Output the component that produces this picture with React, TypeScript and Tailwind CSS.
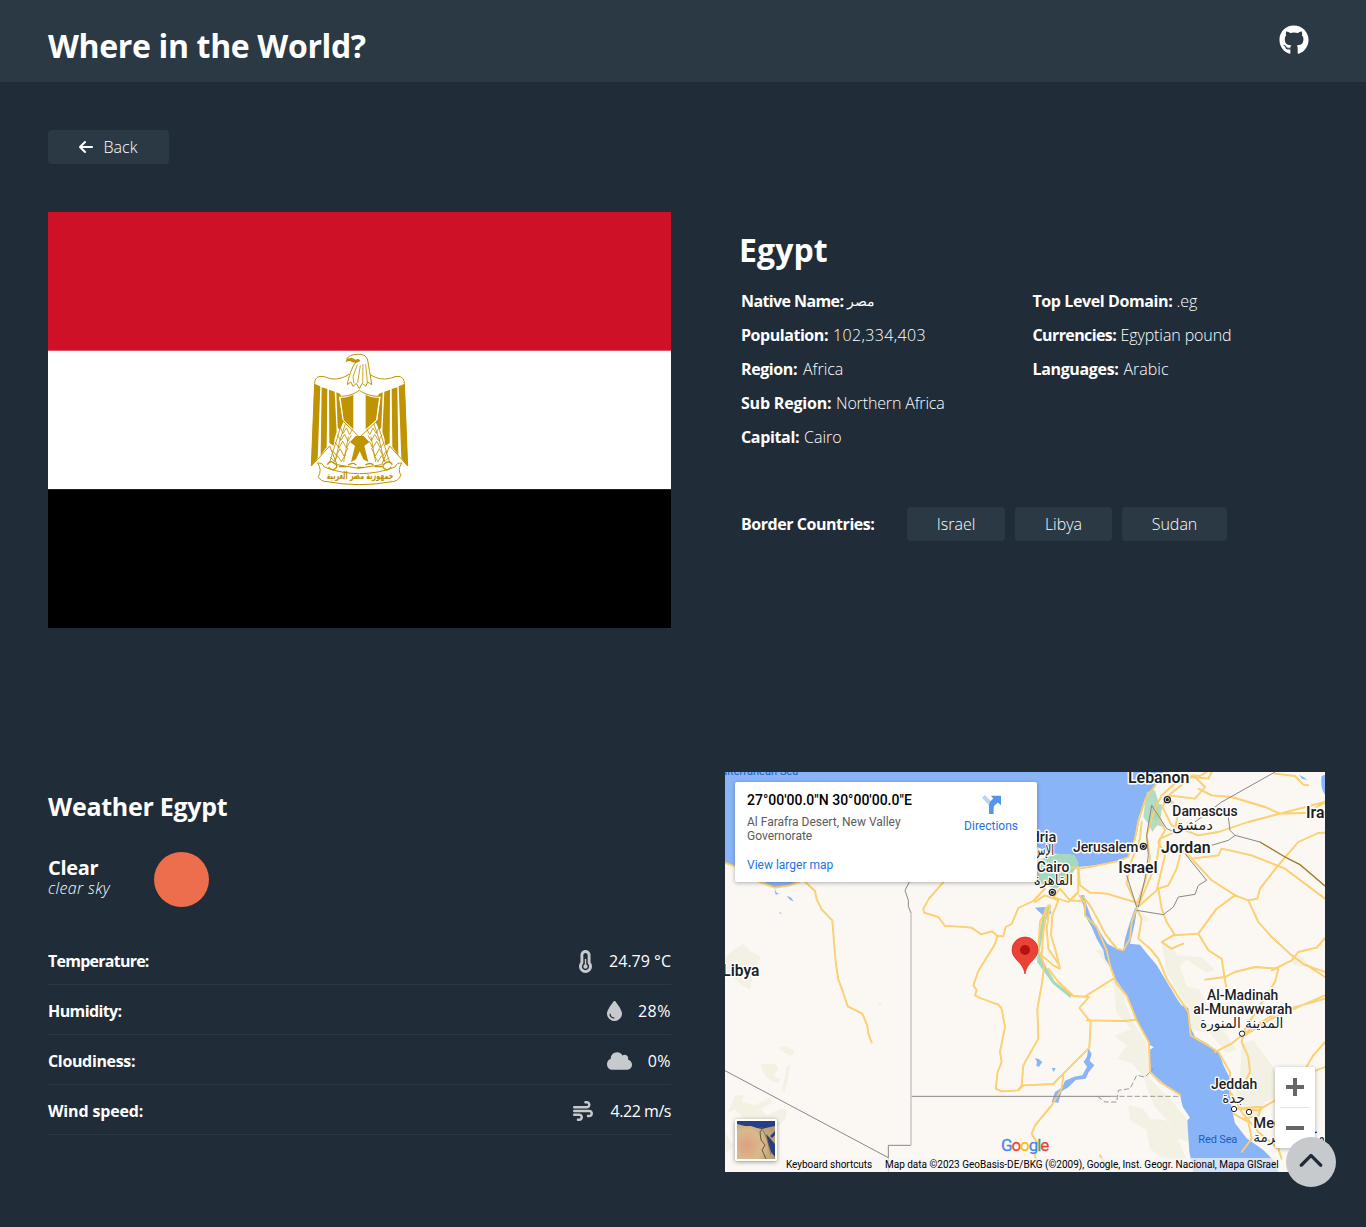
import React from "react";
import {
  FaArrowLeft,
  FaChevronUp,
  FaCloud,
  FaDroplet,
  FaGithub,
  FaTemperatureHalf,
  FaWind,
} from "react-icons/fa6";

type Fact = { label: string; value: string; labelClass: string; valueClass: string };

const leftFacts: Fact[] = [
  { label: "Native Name:", value: "مصر", labelClass: "w-[102px] tracking-[-0.6px]", valueClass: "w-[28px] text-[14px] leading-[16px]" },
  { label: "Population:", value: "102,334,403", labelClass: "w-[88px] tracking-[-0.45px]", valueClass: "tracking-[0.35px]" },
  { label: "Region:", value: "Africa", labelClass: "w-[58px] tracking-[-0.4px]", valueClass: "" },
  { label: "Sub Region:", value: "Northern Africa", labelClass: "w-[91px] tracking-[-0.2px]", valueClass: "tracking-[-0.15px]" },
  { label: "Capital:", value: "Cairo", labelClass: "w-[59px] tracking-[-0.35px]", valueClass: "" },
];

const rightFacts: Fact[] = [
  { label: "Top Level Domain:", value: ".eg", labelClass: "w-[140px] tracking-[-0.4px]", valueClass: "" },
  { label: "Currencies:", value: "Egyptian pound", labelClass: "w-[84px] tracking-[-0.6px]", valueClass: "tracking-[-0.1px]" },
  { label: "Languages:", value: "Arabic", labelClass: "w-[87px] tracking-[-0.35px]", valueClass: "" },
];

const borders = [
  { name: "Israel", width: "w-[98px]" },
  { name: "Libya", width: "w-[97px]" },
  { name: "Sudan", width: "w-[105px]" },
];

const weather = [
  { label: "Temperature:", value: "24.79 °C", labelClass: "tracking-[-0.75px]", valueClass: "", icon: <FaTemperatureHalf size={23} className="-mr-[3px]" /> },
  { label: "Humidity:", value: "28%", labelClass: "tracking-[-0.6px]", valueClass: "tracking-[0.5px]", icon: <FaDroplet className="mr-px h-[20px] w-[15px]" /> },
  { label: "Cloudiness:", value: "0%", labelClass: "tracking-[-0.35px]", valueClass: "tracking-[0.4px]", icon: <FaCloud className="mr-px h-[20px] w-[25px]" /> },
  { label: "Wind speed:", value: "4.22 m/s", labelClass: "tracking-[-0.15px]", valueClass: "tracking-[-0.45px]", icon: <FaWind size={20} className="mr-[2px]" /> },
];

function FactList({ items }: { items: Fact[] }) {
  return (
    <ul className="flex flex-col">
      {items.map((f) => (
        <li key={f.label} className="flex h-[34px] items-center gap-1 whitespace-nowrap pb-px text-[16px]">
          <strong className={`${f.labelClass} font-bold`}>{f.label}</strong>
          <span className={`font-light ${f.valueClass}`}>{f.value}</span>
        </li>
      ))}
    </ul>
  );
}

function EgyptFlag() {
  return (
    <svg viewBox="0 0 623 416" className="h-[416px] w-[623px] shrink-0" aria-label="Flag of Egypt">
      <rect width="623" height="139" fill="#ce1126" />
      <rect y="138.7" width="623" height="138.6" fill="#fff" />
      <rect y="277.3" width="623" height="138.7" />
      <g transform="translate(247 128) scale(.33333)" fill="none" stroke="#c09300" strokeWidth="3" strokeLinejoin="round">
        <path d="M162 103C138 118 116 122 88 110C68 106 59 115 59 130L49 378L68 358L88 336L104 318L126 374L190 385L260 374L284 318L300 336L320 358L338 378L328 130C328 115 318 106 300 110C270 122 248 118 224 103" fill="#fff" />
        <g fill="#c09300" stroke="none">
          <path d="M58 131l18 8-8 216-19 23zM80 142l17 5-2 174-18 25zM102 149l17 6 6 120-6 20-3 22-13-8zM124 157l12 5 12 78-14 30-6-8z" />
          <path d="M329 131l-18 8 8 216 19 23zM307 142l-17 5 2 174 18 25zM285 149l-17 6-6 120 6 20 3 22 13-8zM263 157l-12 5-12 78 14 30 6-8z" />
        </g>
        <path d="M181 66C170 82 161 110 157 134L168 126L174 139L184 130L193 146L202 130L212 139L218 126L230 134C227 108 220 81 218 60C216 46 203 42 186 43C170 44 160 48 155 57L152 68L163 64z" fill="#fff" stroke="none" />
        <path d="M183 66C170 82 161 110 157 134L168 126L174 139L184 130L193 146L202 130L212 139L218 126L230 134C227 108 221 81 218 60C214 45 200 42 186 43C170 44 160 48 155 57" />
        <path d="M155 56L152 69L157 64L166 63C174 70 188 70 196 62L190 56L182 59L170 53z" fill="#c09300" stroke="none" />
        <path d="M187 74L174 110L177 130M196 76L188 128M204 72L203 129M212 72L217 126" strokeWidth="2.5" />
        <path d="M130 168C155 171 178 162 193 151C211 163 233 171 259 168L249 240L194 292L141 240z" fill="#fff" />
        <path d="M137 173C152 174 166 169 175 164V268L146 240zM212 164C222 170 237 174 252 173L243 240L212 268z" fill="#c09300" stroke="none" />
        <path d="M182 288L165 306L180 318L168 366L183 358L194 334L205 358L220 366L208 318L223 306L206 288z" fill="#c09300" stroke="none" />
        <path d="M143 242L103 370M245 242L285 370M151 252L135 300L120 366M237 252L253 300L268 366M160 290L146 366M228 290L242 366" strokeWidth="2.5" />
        <g strokeWidth="2.5">
          <path d="M136 261l8 20 10-17 10 20 8-16M127 284l10 18 12-19 10 20 10-17M120 306l12 18 11-20 12 20 10-20M112 331l12 16 11-21 12 22 12-24M106 352l12 12 10-17 11 18 12-20" />
          <path d="M252 261l-8 20-10-17-10 20-8-16M261 284l-10 18-12-19-10 20-10-17M268 306l-12 18-11-20-12 20-10-20M276 331l-12 16-11-21-12 22-12-24M282 352l-12 12-10-17-11 18-12-20" />
        </g>
        <path d="M68 369Q83 368 88 381Q138 401 193 401Q250 401 300 381Q305 368 320 369Q307 390 318 406Q309 424 292 425Q193 443 96 425Q75 424 70 410Q82 390 68 369z" fill="#fff" />
        <path d="M97 374q9-16 23-3q10 7 2 14q-12 10-21-4M132 380h22m5-5q15-10 25 0m3 7h19m5-7q15-9 24 0m4 5h22M292 374q-9-16-23-3q-10 7-2 14q12 10 21-4" strokeWidth="4" />
        <text x="195" y="417" textAnchor="middle" textLength="200" lengthAdjust="spacingAndGlyphs" fill="#c09300" stroke="none" className="font-['DejaVu_Sans'] text-[31px] font-bold">جمهورية مصر العربية</text>
      </g>
    </svg>
  );
}

const water = "#8ab4f8";

/* Casing and centre line of the road network. */
function Roads({ d }: { d: string }) {
  return (
    <g fill="none" strokeLinejoin="round" strokeLinecap="round">
      <path d={d} stroke="#fcc75a" strokeWidth="5.5" />
      <path d={d} stroke="#fde0a0" strokeWidth="1.6" />
    </g>
  );
}

function MapCanvas() {
  return (
    <svg viewBox="0 0 1800 1200" className="h-[400px] w-[600px]">
      <rect width="1800" height="1200" fill="#fbf8f3" />
      {/* desert relief */}
      <g fill="#f3f0e4">
        <path d="M0 555L25 535L55 515L75 537L107 555L85 600L75 652L50 640L20 610L0 600z" />
        <path d="M160 828q30-12 49 14q-10 15-28 2zM108 875l40 0 12 15-15 22 25 10-15 12q-48-20-47-59zM185 885l12-7-8 40-10 42-8-2zM30 970l25 0-4 20 40 10 45-25 5 18-35 18 20 20 45-22 15 10-5 25-28 22-35-15-10 25 28 12-20 8-40-25-25 12-12-25 20-18-30-28-20 10zM0 1082l25 40-20 20zM458 695q7-8 12 2q-5 9-12-2z" />
        <path d="M1165 620q40 30 34 70l25 60 40 60 10 110 60 60 50 60 12 70-40-10-28-55-40-42-35-90-32-40-45-12 30-40-38-30 50-20-45-50z" />
        <path d="M1210 1000l45 10 20 30 50 5 35 60 25 55h-70l-40-30-10-55-50-30z" />
        <path d="M1310 510q30 20 50 40l70 5 40 38-25 10-60-40-20 20 20 60 40 10 30 65-45-5 35 40 50 20 40 60-30 10-50-60-60-10-20-90-50-80zM1550 815l35-10 60 80 20 90-45 15-20 70-70-90 15-55zM1250 420l10 30 15-5zM1070 520l40 10 35 50 30 5-15-40zM1700 550l35 5 15 30-45-6z" />
      </g>
      {/* Mediterranean, lakes */}
      <path d="M0 0H1315L1287 50L1257 90L1242 150L1232 200L1210 255L1175 268L1110 280L1060 285L1035 248L990 245L935 225L900 250L700 290H300L215 332L190 340L150 347L115 330L28 283L0 273z" fill={water} />
      <path d="M148 350l8 13 8 2-12 3zM185 372l12 4 9 12-10-3zM162 420l9 4-6 1z" fill={water} />
      <path d="M915 310L945 262L1000 245L1048 248L1062 275L1030 320L995 350L940 332z" fill="#a5d9bd" />
      <path d="M1265 60l25-5 12 40 10 5-5 35 10 30-20-5-15 20-12-25-15-20 5-40z" fill="#b2dcc3" />
      <path d="M1280 105l18-3 4 30-8 15-14-8zM1318 0h10l-4 14-10 2z" fill="#a5d9bd" />
      <path d="M930 407l40-3 10 20-25 7zM1723 8l25 15-17-2zM1790 12l10-4v60q-15-20-10-56z" fill={water} />
      <path d="M958 405l20 0-17 48-10 45-7 40 16 40 29 50 52 42-5 8-52-42-48-66 7-80z" fill="#a5d9bd" />
      {/* Red Sea with both gulfs */}
      <path
        transform="translate(885 0)"
        d="M178 372L190 400L195 430L215 465L230 500L250 535L255 560L275 590L288 624L320 669L350 744L385 809L387 818L402 826L388 834L388 841L392 899L430 934L480 969L488 1004L510 1037L502 1045L508 1139L520 1200H775L765 1169L730 1134L680 1099L645 1054L635 1009L628 960L635 929L610 879L595 839L560 814L525 794L510 764L505 709L484 700L470 679L440 629L410 579L385 550L360 518L330 515L345 450L352 405L345 408L330 450L315 500L310 535L290 530L262 515L240 480L215 440L200 400L192 368z"
        fill={water}
      />
      <path d="M1090 828l10 18-6 20 14 14-18 22-8 18-30 4-22 22-20 12-10 34-20-2 10-30 22-14 8-20 28-12 24-4 14-26-10-14 10-16zM930 858l12 4 10 8-10 14-8-2 2-12zM980 888h12l-6 12z" fill={water} />

      {/* roads */}
      <Roads d="M0 272L35 285L100 328L150 347L195 340L235 325L270 357L275 382L290 412L322 445L327 510L333 579L340 623L352 655L368 703L412 725L427 760L430 785L440 812" />
      <Roads d="M660 325L612 380L595 410L597 422L640 435L660 462L690 463L740 467L768 487L800 478L818 492L835 493L842 465L860 456L880 408L925 387L960 350L920 325" />
      <Roads d="M818 492L808 520L760 597L745 640L755 655L750 670L765 678L820 698L830 710L840 765L825 840L830 870L818 900L812 950L830 958L880 955L890 940L895 880L940 800L937 710L950 640L958 580L940 530L945 450L970 400" />
      <Roads d="M885 950L895 940L985 936L1010 910L1060 860L1093 827L1097 750L1063 708L1092 675L1045 672L1000 630L970 590M1082 672L1110 655L1165 620M1085 745L1200 747L1232 743M1015 910L1010 950L980 1000L930 1060L920 1085L935 1110L930 1155L945 1180" />
      <Roads d="M965 410L955 480L950 550L985 580L1005 590L993 540L978 490L982 430L1000 385L960 370L930 390M985 375L1030 390L1060 360L1060 285M985 375L1005 350L1035 385L1080 388M975 400L965 470L970 530L1000 575" />
      <Roads d="M1040 285L1062 290L1100 284L1175 268L1210 255L1230 200L1240 145L1262 80L1290 40L1318 0M1060 290L1065 340L1095 362L1145 365L1235 392M1063 370L1080 395L1080 430L1115 465L1145 535L1155 580L1175 635L1205 670L1235 745L1272 812L1275 900L1305 930L1365 968" />
      <Roads d="M1075 375L1095 400L1120 445L1140 485L1175 530L1195 535L1215 500L1220 450L1235 408L1295 355L1320 250L1300 210L1320 175L1290 110L1310 70L1355 30L1400 15L1450 20L1460 0M1235 400L1205 335L1218 270L1245 200L1250 150M1235 400L1260 330L1275 260L1265 190L1290 110" />
      <Roads d="M1315 100L1325 75L1405 10L1440 45L1410 80L1330 70M1325 75L1360 110L1350 180L1305 200L1295 270L1245 390M1310 100L1340 160L1420 190L1480 180L1570 150L1665 125L1800 90M1420 50L1460 70L1520 75L1620 105L1665 125M1665 125L1740 123L1800 92" />
      <Roads d="M1445 0L1425 12L1400 10M1650 5L1710 12L1735 38L1750 40M1370 230L1355 290L1330 340L1300 350L1310 410L1325 450L1350 490M1375 235L1400 260L1480 250L1490 230L1580 250L1680 290L1800 380M1400 260L1460 325L1530 370L1570 385" />
      <Roads d="M1570 385L1597 380L1605 350L1650 292L1685 250L1720 210L1780 183L1800 182M1570 385L1600 450L1640 495L1700 550L1740 579L1800 600M1530 370L1475 410L1420 485L1345 490L1310 510L1340 530L1375 515M1420 485L1450 535L1490 560L1500 625L1510 680M1800 498L1775 527L1720 540L1700 565L1640 595M1235 410L1250 440L1240 500L1275 530L1300 560L1325 620L1360 675L1390 720L1397 790L1440 815L1480 840L1515 900L1515 970" />
      <Roads d="M1440 623L1500 615L1530 600L1590 585L1660 590L1650 630L1560 770L1550 810L1570 855L1575 900L1560 930L1530 950M1470 840L1520 815L1550 790L1610 750L1660 720L1800 680M1560 790L1640 740L1800 670M1745 579L1800 615M1520 965L1550 1020L1600 1080L1660 1130L1670 1160M1530 1010L1600 1015L1650 985L1690 945L1760 900L1800 885M1720 925L1765 850L1800 810" />
      <Roads d="M1125 1150L1140 1175L1180 1190M1550 1140L1580 1100L1570 1050L1525 1025M1525 1010L1610 1005L1600 1030L1560 1040" />

      {/* borders */}
      <g fill="none" stroke="#888" strokeWidth="3">
        <path d="M553 330L540 355L550 385L550 403L558 423M0 896L490 1157M490 1200V1120H558M558 973H1160M1205 310L1235 405M1235 415L1315 428L1345 405L1360 375L1410 367L1420 340L1445 325L1380 245M1410 150L1490 90L1650 0M1460 220L1510 205L1530 190L1515 175L1510 135M1530 190L1605 210L1680 255L1725 278L1800 342M1240 405L1260 320L1270 250L1265 190L1280 100M1280 100L1325 170L1345 178" />
        <path d="M558 423V1120" stroke="#ccc" strokeWidth="5" />
        <path d="M1118 973L1140 990L1175 990L1180 955L1215 950L1235 910L1260 915L1285 890M1160 973H1365" strokeDasharray="16 7" strokeWidth="2.5" />
        <path d="M1605 210L1680 255L1725 278L1800 342" stroke="#aa812b" strokeWidth="4" />
      </g>

      {/* cities */}
      <g fill="#fff" stroke="#202124" strokeWidth="4">
        <circle cx="1327" cy="83" r="9" /><circle cx="1255" cy="223" r="9" /><circle cx="982" cy="361" r="9" />
        <circle cx="1551" cy="785" r="8" strokeWidth="3" /><circle cx="1527" cy="1011" r="8" strokeWidth="3" /><circle cx="1572" cy="1020" r="8" strokeWidth="3" />
      </g>
      <g fill="#202124"><circle cx="1327" cy="83" r="5" /><circle cx="1255" cy="223" r="5" /><circle cx="982" cy="361" r="5" /></g>

      {/* labels */}
      <g className="font-['Roboto']" fill="#202124" stroke="#fff" strokeWidth="9" strokeLinejoin="round" paintOrder="stroke">
        <g fontSize="48" fontWeight="600">
          <text x="1209" y="34" textLength="184" lengthAdjust="spacingAndGlyphs">Lebanon</text>
          <text x="1308" y="242" textLength="149" lengthAdjust="spacingAndGlyphs">Jordan</text>
          <text x="1180" y="302" textLength="118" lengthAdjust="spacingAndGlyphs">Israel</text>
          <text x="1743" y="137" textLength="82" lengthAdjust="spacingAndGlyphs">Iraq</text>
          <text x="-8" y="611" textLength="111" lengthAdjust="spacingAndGlyphs">Libya</text>
          <text x="1585" y="1068" fontSize="44" fontWeight="500">Mecca</text>
        </g>
        <g fontSize="44" fontWeight="500">
          <text x="1342" y="132" textLength="196" lengthAdjust="spacingAndGlyphs">Damascus</text>
          <text x="1044" y="240" textLength="196" lengthAdjust="spacingAndGlyphs">Jerusalem</text>
          <text x="935" y="300" textLength="98" lengthAdjust="spacingAndGlyphs">Cairo</text>
          <text x="850" y="210" textLength="144" lengthAdjust="spacingAndGlyphs">xandria</text>
          <text x="1446" y="684" textLength="214" lengthAdjust="spacingAndGlyphs">Al-Madinah</text>
          <text x="1405" y="726" textLength="297" lengthAdjust="spacingAndGlyphs">al-Munawwarah</text>
          <text x="1458" y="952" textLength="139" lengthAdjust="spacingAndGlyphs">Jeddah</text>
        </g>
        <g fontSize="42" strokeWidth="7" className="font-['DejaVu_Sans']">
          <text x="1342" y="174" textLength="122" lengthAdjust="spacingAndGlyphs">دمشق</text>
          <text x="926" y="338" textLength="118" lengthAdjust="spacingAndGlyphs">القاهرة</text>
          <text x="925" y="249" textLength="62" lengthAdjust="spacingAndGlyphs">الإس</text>
          <text x="1425" y="767" textLength="250" lengthAdjust="spacingAndGlyphs">المدينة المنورة</text>
          <text x="1492" y="994" textLength="67" lengthAdjust="spacingAndGlyphs">جدة</text>
          <text x="1585" y="1109" textLength="215" lengthAdjust="spacingAndGlyphs">مكة المكرمة</text>
        </g>
      </g>
      <g className="font-['Roboto']" fill="#1a5dc0" fontSize="33">
        <text x="-12" y="9" textLength="232">diterranean Sea</text>
        <text x="1420" y="1112" textLength="117">Red Sea</text>
      </g>

      {/* marker */}
      <path d="M900 606C895 570 861 562 861 534A39 39 0 0 1 939 534C939 562 905 570 900 606z" fill="#ea4335" stroke="#c5221f" strokeWidth="2" />
      <circle cx="900" cy="534" r="15" fill="#b31412" />
    </svg>
  );
}

function GoogleMark() {
  return (
    <div className="absolute left-[276px] top-[361px] font-['Roboto'] text-[17px] leading-[24px] tracking-[-1.1px] [-webkit-text-stroke:0.3px_currentColor] [text-shadow:0_0_2px_#fff]">
      <span className="text-[#4285f4]">G</span>
      <span className="text-[#ea4335]">o</span>
      <span className="text-[#fbbc05]">o</span>
      <span className="text-[#4285f4]">g</span>
      <span className="text-[#34a853]">l</span>
      <span className="text-[#ea4335]">e</span>
    </div>
  );
}

function CountryMap() {
  return (
    <div className="relative h-[400px] w-[600px] overflow-hidden font-['Roboto']">
      <MapCanvas />
      <div className="absolute left-[10px] top-[10px] flex h-[100px] w-[302px] justify-between rounded-[2px] bg-white py-[9px] pl-3 pr-[19px] shadow-[0_1px_4px_rgba(0,0,0,0.3)]">
        <div className="whitespace-nowrap">
          <p className="text-[14px] font-medium leading-[18px] text-black">27°00'00.0"N 30°00'00.0"E</p>
          <p className="mt-[6px] text-[12px] leading-[14px] text-[#5b5b5b]">
            Al Farafra Desert, New Valley
            <br />
            Governorate
          </p>
          <p className="mt-[14px] text-[12px] leading-[16px] text-[#1a73e8]">View larger map</p>
        </div>
        <div className="flex flex-col items-center pt-[4px]">
          <svg viewBox="0 0 54 54" className="h-[19px] w-[19px]">
            <path d="M0 8L8 0L29 21L20 30z" fill="#b8d3f4" />
            <path d="M20 54V29Q20 20 27 15L32 10L25 2H54V29L45 21L36 29Q33 32 33 37V54z" fill="#5594e8" />
          </svg>
          <p className="mt-[4px] text-[12px] leading-[16px] text-[#1a73e8]">Directions</p>
        </div>
      </div>
      <div className="absolute left-[10px] top-[347px] h-[42px] w-[42px] overflow-hidden rounded-[2px] border-2 border-white shadow-[0_1px_4px_rgba(0,0,0,0.4)]">
        <svg viewBox="0 0 38 38" className="h-full w-full">
          <defs>
            <radialGradient id="sand" cx=".25" cy=".65" r=".8">
              <stop stopColor="#dda083" />
              <stop offset=".5" stopColor="#d9ba8c" />
              <stop offset="1" stopColor="#b59a75" />
            </radialGradient>
          </defs>
          <rect width="38" height="38" fill="url(#sand)" />
          <path d="M0 0H38V5L33 6L25 8L20 7L14 5L8 5L0 3z" fill="#263f83" />
          <path d="M29 13L32 16L38 23V36L34 31L31 22zM33 15L38 10V14L35 17z" fill="#283f7c" />
          <path d="M22 6L26 7L23 11L24 19L28 24L25 29L29 38" fill="none" stroke="#52543c" strokeWidth="0.9" />
          <path d="M26 9L30 18L34 34" fill="none" stroke="#826a51" strokeWidth="0.8" />
        </svg>
      </div>
      <GoogleMark />
      <div className="absolute bottom-0 left-[56px] flex h-[14px] items-center whitespace-nowrap bg-[#f5f5f5]/70 pl-[5px] text-[10px] leading-[14px] text-black">
        <span className="w-[86px] tracking-[-0.03px]">Keyboard shortcuts</span>
        <span className="ml-[13px] w-[394px] tracking-[-0.01px]">Map data ©2023 GeoBasis-DE/BKG (©2009), Google, Inst. Geogr. Nacional, Mapa GISrael</span>
      </div>
      <div className="absolute left-[550px] top-[295px] flex h-[81px] w-[40px] flex-col items-center rounded-[2px] bg-white shadow-[0_1px_4px_rgba(0,0,0,0.3)]">
        <svg viewBox="0 0 18 18" className="mt-[11px] h-[18px] w-[18px]"><path d="M7 0h4v7h7v4h-7v7H7v-7H0V7h7z" fill="#666" /></svg>
        <div className="mt-[11px] h-px w-[30px] bg-[#e6e6e6]" />
        <div className="mt-[18px] h-[4px] w-[18px] bg-[#666]" />
      </div>
    </div>
  );
}

export default function App() {
  return (
    <div className="h-[1227px] overflow-hidden bg-[#202c37] font-['Open_Sans',sans-serif] text-white">
      <header className="flex h-[82px] items-start justify-between bg-[#2b3945] pl-12 pr-[57.5px]">
        <h1 className="mt-[24px] whitespace-nowrap text-[32px] font-bold leading-[44px] tracking-[-0.35px]">Where in the World?</h1>
        <FaGithub size={30} className="mt-[25px]" />
      </header>

      <main className="px-12 pt-12">
        <button className="flex h-[34px] w-[121px] items-center justify-center gap-[10px] rounded-[4px] bg-[#2b3945] pb-px pr-[2px] text-[16px] font-light">
          <FaArrowLeft size={16} />
          Back
        </button>

        <section className="mt-12 flex">
          <EgyptFlag />
          <div className="ml-[70px] pt-[16px]">
            <h2 className="-ml-[2px] text-[32px] font-bold leading-[44px] tracking-[0.1px]">Egypt</h2>
            <div className="mt-[12px] flex">
              <div className="w-[291.5px]"><FactList items={leftFacts} /></div>
              <FactList items={rightFacts} />
            </div>
            <div className="mt-[53px] flex items-center gap-[10px]">
              <strong className="w-[156px] whitespace-nowrap pb-px text-[16px] font-bold tracking-[-0.45px]">Border Countries:</strong>
              {borders.map((b) => (
                <button key={b.name} className={`${b.width} h-[34px] rounded-[4px] bg-[#2b3945] pb-px text-[16px] font-light`}>
                  {b.name}
                </button>
              ))}
            </div>
          </div>
        </section>

        <section className="mt-36 flex">
          <div className="w-[623px] shrink-0 pt-[16px]">
            <h3 className="text-[25px] font-bold leading-[36px] tracking-[-0.28px]">Weather Egypt</h3>
            <div className="mt-[28px] flex">
              <div className="w-[106px] pt-[4px]">
                <p className="text-[20px] font-bold leading-[23px] tracking-[-0.3px]">Clear</p>
                <p className="text-[16px] font-light italic leading-[18px] tracking-[0.35px]">clear sky</p>
              </div>
              <div className="h-[55px] w-[55px] rounded-full bg-[#ec6e4c]" />
            </div>
            <ul className="mt-[28px]">
              {weather.map((w) => (
                <li key={w.label} className="flex h-[50px] items-center justify-between border-b border-[#2b3945] pt-[3px]">
                  <strong className={`text-[16px] font-bold ${w.labelClass}`}>{w.label}</strong>
                  <span className="flex items-center gap-[15px] text-[16px]">
                    <span className="text-[#c7cacd]">{w.icon}</span>
                    <span className={w.valueClass}>{w.value}</span>
                  </span>
                </li>
              ))}
            </ul>
          </div>
          <div className="ml-[54px] shrink-0">
            <CountryMap />
          </div>
        </section>
      </main>

      <button className="fixed left-[1286px] top-[1137px] flex h-[50px] w-[50px] items-center justify-center rounded-full bg-[#c7cacd] text-[#202c37]" aria-label="Back to top">
        <FaChevronUp size={26} />
      </button>
    </div>
  );
}
